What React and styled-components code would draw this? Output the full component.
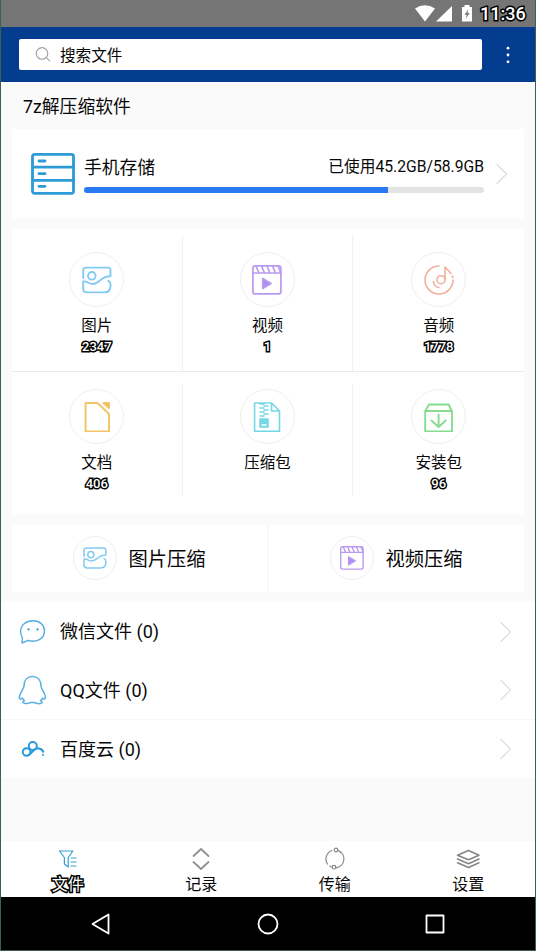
import React from "react";
import styled, { createGlobalStyle, css } from "styled-components";

const GlobalStyle = createGlobalStyle`
  * { box-sizing: border-box; }
  body { margin: 0; background: #fafafa; }
  svg { display: block; flex: none; }
`;

const outline = css`
  color: #fff;
  -webkit-text-stroke: 3px #000;
  paint-order: stroke fill;
`;

const Screen = styled.div`
  width: 536px;
  height: 951px;
  display: flex;
  flex-direction: column;
  background: #fafafa;
  border: solid #3c5e54;
  border-width: 0 1px 1px;
  color: #080808;
  font-family: Roboto, "Noto Sans CJK SC", sans-serif;
  white-space: nowrap;
  overflow: hidden;
`;

const StatusBar = styled.div`
  height: 27px;
  flex: none;
  display: flex;
  justify-content: flex-end;
  align-items: center;
  padding-right: 9px;
  background: #757575;
`;

const Clock = styled.span`
  ${outline}
  margin-left: 7px;
  width: 46px;
  font-size: 18px;
  font-weight: 500;
  line-height: 27px;
`;

const AppBar = styled.header`
  height: 55px;
  flex: none;
  display: flex;
  align-items: center;
  padding-left: 18px;
  background: #043c8f;
`;

const SearchBox = styled.div`
  width: 463px;
  height: 31px;
  margin-top: -1px;
  display: flex;
  align-items: center;
  gap: 9px;
  padding: 0 0 1px 16px;
  border-radius: 2px;
  background: #fff;
  font-size: 15.6px;
`;

const MoreButton = styled.div`
  flex: 1;
  display: flex;
  justify-content: center;
  padding-right: 2px;
`;

const Title = styled.h1`
  height: 47px;
  flex: none;
  margin: 0;
  padding-left: 22px;
  font-size: 17.8px;
  font-weight: 400;
  line-height: 50px;
`;

const Storage = styled.section`
  height: 89px;
  flex: none;
  display: flex;
  align-items: center;
  margin: 0 11px;
  padding-left: 18px;
  background: #fff;
`;

const StorageBody = styled.div`
  width: 400px;
  margin: 2px 12px 0 8px;
`;

const StorageText = styled.div`
  display: flex;
  justify-content: space-between;
  height: 31px;
  line-height: 23px;
  font-size: 17.8px;
`;

const Usage = styled.span`
  font-size: 15.7px;
  line-height: 21px;
`;

const Track = styled.div`
  height: 6px;
  border-radius: 3px;
  background: #e3e3e3;
  overflow: hidden;
`;

const Fill = styled.div`
  width: 76%;
  height: 100%;
  background: #2979f2;
`;

const Categories = styled.section`
  height: 285px;
  flex: none;
  margin: 11px 11px 0;
  background: #fff;
`;

const CategoryRow = styled.div`
  display: grid;
  grid-template-columns: repeat(3, 1fr);
  height: ${(p) => (p.$last ? 142 : 143)}px;
  padding: ${(p) => (p.$last ? "12px 0 18px" : "6px 0 0")};
  border-bottom: ${(p) => (p.$last ? "none" : "1px solid #ebebeb")};
`;

const Category = styled.div`
  display: flex;
  flex-direction: column;
  align-items: center;
  padding-top: ${(p) => (p.$last ? 5 : 17)}px;
  border-right: 1px solid #f1f1f1;
  &:last-child { border-right: 0; }
`;

const Circle = styled.div`
  width: ${(p) => p.$size}px;
  height: ${(p) => p.$size}px;
  flex: none;
  display: grid;
  place-items: center;
  border: 1.5px solid #efefef;
  border-radius: 50%;
`;

const Label = styled.div`
  margin-top: 7px;
  font-size: 15.5px;
  line-height: 24px;
`;

const Count = styled.div`
  ${outline}
  font-size: 13px;
  font-weight: 500;
  line-height: 17px;
`;

const Tools = styled.section`
  height: 67px;
  flex: none;
  display: grid;
  grid-template-columns: 1fr 1fr;
  gap: 2px;
  margin: 11px 11px 10px;
`;

const Tool = styled.div`
  display: flex;
  align-items: center;
  padding: 0 0 1px 61px;
  gap: 12px;
  background: #fff;
  font-size: 19.3px;
  line-height: 28px;
`;

const ToolText = styled.span`
  margin: 3px 0 0 -0.5px;
`;

const List = styled.section`
  flex: none;
  height: 176px;
  display: grid;
  grid-template-rows: 59px 59px 58px;
  background: #fff;
`;

const Row = styled.div`
  display: flex;
  align-items: center;
  padding: 0 23px 0 16px;
  border-bottom: ${(p) => (p.$line ? "1px solid #f6f6f6" : "none")};
  font-size: 18px;
`;

const RowText = styled.span`
  flex: 1;
  margin-left: 13px;
  line-height: 26px;
  padding-top: 1px;
`;

const Tabs = styled.nav`
  height: 56px;
  flex: none;
  margin-top: 63px;
  display: grid;
  grid-template-columns: repeat(4, 1fr);
  background: #fff;
`;

const Tab = styled.div`
  display: flex;
  flex-direction: column;
  align-items: center;
  padding-top: 6px;
  font-size: 16px;
  line-height: 24px;
`;

const TabLabel = styled.span`
  margin-top: 2px;
  ${(p) => p.$active && outline}
`;

const SystemBar = styled.div`
  flex: 1;
  display: grid;
  grid-template-columns: repeat(3, 167px);
  justify-content: center;
  justify-items: center;
  align-items: center;
  background: #000;
`;

function Icon({ w = 30, h = w, box = `0 0 ${w} ${h}`, color, stroke = 1.6, children }) {
  return (
    <svg width={w} height={h} viewBox={box} fill="none" stroke={color}
      strokeWidth={stroke} strokeLinecap="round" strokeLinejoin="round">
      {children}
    </svg>
  );
}

const Chevron = () => (
  <Icon w={12} h={22} color="#dcdcdc" stroke={1.2}><path d="M1 1.5 10.5 11 1 20.5" /></Icon>
);

const Picture = ({ size = 30 }) => (
  <Icon w={size} box="0 0 30 30" color="#83cbf2" stroke={1.9}>
    <path d="M1.2 13V5.5Q1.2 2.6 4 2.6H26Q28.5 2.6 28.5 5V11.3C24 11.3 21.5 12.5 18.5 15S12.5 20.5 7 18Q3.5 15.8 1.2 16.5V23.5Q1.2 27.4 5.2 27.4H22Q28.5 27.4 28.5 21V19.5Q28.5 16.5 26.3 15.8" />
    <circle cx="9.8" cy="10.8" r="3.8" />
  </Icon>
);

const Video = ({ size = 30 }) => (
  <Icon w={size} box="0 0 30 30" color="#b99af2" stroke={1.7}>
    <rect x=".9" y=".9" width="28" height="28" rx="2.5" />
    <path d="M1 8H29M4 1 7 8M9.5 1 12.5 8M15 1 18 8M20.5 1 23.5 8M26 1 28.5 7" />
    <path d="M10.7 13.5V23.5L19 18.5Z" fill="#b18df0" />
  </Icon>
);

const Audio = () => (
  <Icon color="#f1b09c" stroke={1.6}>
    <path d="M15 1A14 14 0 1 0 29 15M28.7 12.5 28.3 11M9.3 16.5A6.8 6.8 0 0 0 15 22.5M21 14.5V2L27 8.5" />
    <circle cx="17" cy="14.7" r="4" />
  </Icon>
);

const Doc = () => (
  <Icon color="#f3c367" stroke={1.9}>
    <path d="M3.6 1H15.5L27 12V29.4H3.6Z" />
    <path d="M21.5 1H27V6Z" fill="#f3c367" />
  </Icon>
);

const Zip = () => (
  <Icon color="#74d7e6" stroke={1.6}>
    <path d="M2.6 1H19.5L27.5 9V29.4H2.6ZM19.5 1V9H27.5M8 2H12M12 4H16M8 6H12M12 8H16M8 10H12M12 12H16M8 14H12" />
    <path d="M8 17H16V25H8Z" fill="#74d7e6" />
    <path d="M10 23H14" stroke="#fff" />
  </Icon>
);

const Package = () => (
  <Icon color="#86dd8f" stroke={1.9}>
    <path d="M1.2 9H28V29.5H1.2ZM1.2 9 5 2.5H24.5L28 9M14.6 12.5V25M7.5 18.5 14.6 25 21.7 18.5" />
  </Icon>
);

const Server = () => (
  <Icon w={46} h={44} color="#2c9bd7" stroke={2.8}>
    <rect x="2.5" y="2.3" width="41" height="39" rx="2" />
    <path d="M2.5 15.2H43.5M2.5 28.3H43.5M9 9H15M9 21.7H15M9 34.3H15" />
  </Icon>
);

const Chat = () => (
  <Icon color="#58ade0" stroke={1.4}>
    <path d="M5.5 21Q3.6 17.8 3.6 14.5C3.6 8 9 3.8 16 3.8S27.5 8 27.5 14 23 24.2 16 24.2Q13 24.2 11 23.4L5 26Z" />
    <path d="M11.5 12.3V12.4M20.5 12.3V12.4" stroke="#2798df" strokeWidth="2.2" />
  </Icon>
);

const Penguin = () => (
  <Icon color="#5aafe0" stroke={1.5}>
    <path d="M7 11C7 5 10.5 1.5 15.5 1.5S24 5 24 11C24 14 28.5 18 28.5 22.5Q28.2 25.5 25.8 23Q25 24.6 23.5 25.5Q25.6 26.5 24.8 27.8C22.5 29.3 18.5 28.5 17.7 27.5H13.5C12.5 28.5 8 29.3 6 27.5Q5.6 26.2 7.5 25.5Q6 24.5 5.3 23Q2.6 25.5 2.3 22.5C2.3 18 7 14 7 11Z" />
  </Icon>
);

const Cloud = () => (
  <Icon color="#2b9bd8" stroke={2}>
    <circle cx="9.6" cy="18" r="3.8" />
    <circle cx="15.8" cy="12" r="4" />
    <path d="M12.3 20.5C15.8 18 17.3 13.8 21.8 14.4Q25.3 15 26.3 17.8M26 21V21.1" />
  </Icon>
);

const Filter = () => (
  <Icon w={24} color="#349fd3" stroke={1.2}>
    <path d="M3.5 4H16.8L12.2 10.5V20M3.5 4 8.4 10.5V17L12.2 20M15 11H20M15 15H20M15 19H20" />
  </Icon>
);

const UpDown = () => (
  <Icon w={24} color="#919191" stroke={1.8}><path d="M4.5 9 12 2 19.5 9M4.5 15 12 22 19.5 15" /></Icon>
);

const Transfer = () => (
  <Icon w={24} color="#888" stroke={1.2}>
    <path d="M9 3.5A9 9 0 0 0 4.5 17M7 19 8.3 20M15.5 3.6A9 9 0 0 1 13 20.8M18 5.5 16 4" />
    <circle cx="13" cy="3" r="1.8" /><circle cx="11" cy="20.2" r="1.8" />
  </Icon>
);

const Layers = () => (
  <Icon w={24} color="#858585" stroke={1.5}>
    <path d="M1.5 8.2 12.5 3.5 23 8.2 12.5 12.8ZM1.5 12 12.5 16.7 23 12M1.5 15.8 12.5 20.5 23 15.8" />
  </Icon>
);

const categories = [
  [["图片", "2347", Picture], ["视频", "1", Video], ["音频", "1778", Audio]],
  [["文档", "406", Doc], ["压缩包", "", Zip], ["安装包", "96", Package]],
];
const rows = [["微信文件 (0)", Chat], ["QQ文件 (0)", Penguin], ["百度云 (0)", Cloud]];
const tabs = [["文件", Filter], ["记录", UpDown], ["传输", Transfer], ["设置", Layers]];

export default function App() {
  return (
    <>
      <GlobalStyle />
      <Screen>
        <StatusBar>
          <svg width="58" height="18" viewBox="0 0 58 18" fill="#fff">
            <path d="M0 3.5Q10 -3 20 3.5L10 16.5ZM37 1V16.5H21Z" />
            <path d="M47 2H49.5V0H54.5V2H57V16.5H47Z" />
            <path d="M53.4 4 49.6 9.7H51.8L50.7 14 54.6 8.1H52.4Z" fill="#757575" />
          </svg>
          <Clock>11:36</Clock>
        </StatusBar>
        <AppBar>
          <SearchBox>
            <Icon w={16} color="#a0a0a0" stroke={1.1}><circle cx="7" cy="7.4" r="5.8" /><path d="M11.3 11.7 14.8 14.9" /></Icon>
            搜索文件
          </SearchBox>
          <MoreButton>
            <svg width="4" height="18" viewBox="0 0 4 18" fill="#fff"><circle cx="2" cy="2.2" r="1.4" /><circle cx="2" cy="9" r="1.4" /><circle cx="2" cy="15.8" r="1.4" /></svg>
          </MoreButton>
        </AppBar>
        <Title>7z解压缩软件</Title>
        <Storage>
          <Server />
          <StorageBody>
            <StorageText><span>手机存储</span><Usage>已使用45.2GB/58.9GB</Usage></StorageText>
            <Track><Fill /></Track>
          </StorageBody>
          <Chevron />
        </Storage>
        <Categories>
          {categories.map((items, i) => (
            <CategoryRow key={i} $last={i === 1}>
              {items.map(([name, count, Glyph]) => (
                <Category key={name} $last={i === 1}>
                  <Circle $size={55}><Glyph /></Circle>
                  <Label>{name}</Label>
                  <Count>{count}</Count>
                </Category>
              ))}
            </CategoryRow>
          ))}
        </Categories>
        <Tools>
          <Tool><Circle $size={44}><Picture size={24} /></Circle><ToolText>图片压缩</ToolText></Tool>
          <Tool><Circle $size={44}><Video size={24} /></Circle><ToolText>视频压缩</ToolText></Tool>
        </Tools>
        <List>
          {rows.map(([name, Glyph], i) => (
            <Row key={name} $line={i === 1}><Glyph /><RowText>{name}</RowText><Chevron /></Row>
          ))}
        </List>
        <Tabs>
          {tabs.map(([name, Glyph], i) => (
            <Tab key={name}><Glyph /><TabLabel $active={i === 0}>{name}</TabLabel></Tab>
          ))}
        </Tabs>
        <SystemBar>
          <Icon w={22} color="#fff" stroke={1.8}><path d="M18.5 1.5V20.5L2.5 11Z" /></Icon>
          <Icon w={22} color="#fff" stroke={1.8}><circle cx="11" cy="11" r="9.5" /></Icon>
          <Icon w={22} color="#fff" stroke={1.8}><rect x="2.5" y="2.5" width="17" height="17" /></Icon>
        </SystemBar>
      </Screen>
    </>
  );
}
